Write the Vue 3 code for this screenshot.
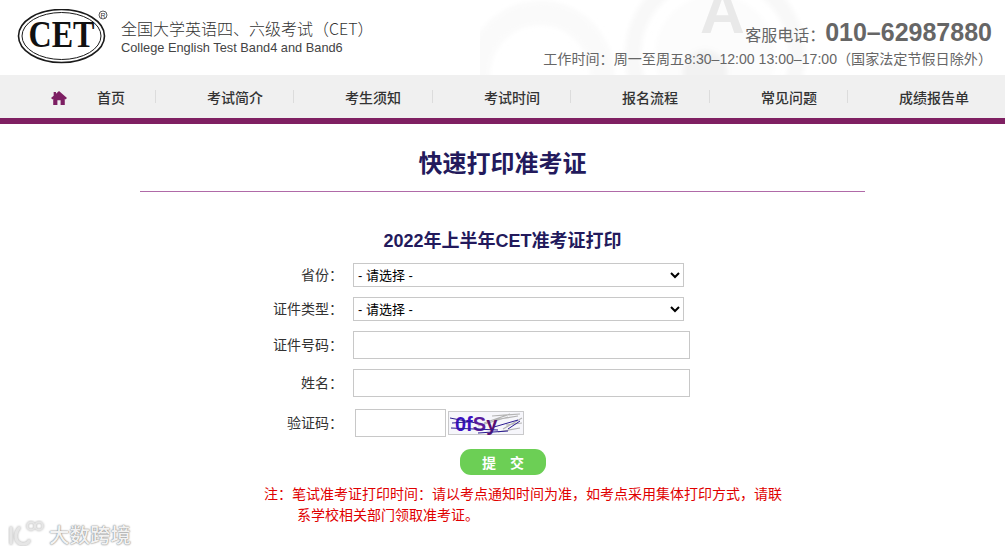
<script setup>
const navItems = [
  { label: '考试简介', width: 138 },
  { label: '考生须知', width: 139 },
  { label: '考试时间', width: 138 },
  { label: '报名流程', width: 139 },
  { label: '常见问题', width: 138 },
  { label: '成绩报告单', width: 156 }
]
</script>

<template>
  <div class="page">
    <header class="top">
      <svg class="decor" width="525" height="75" viewBox="0 0 525 75" aria-hidden="true">
        <defs>
          <filter id="soft"><feGaussianBlur stdDeviation="2.5" /></filter>
        </defs>
        <g filter="url(#soft)">
          <circle cx="60" cy="75" r="62" fill="none" stroke="#fafafa" stroke-width="24" />
          <circle cx="235" cy="55" r="82" fill="none" stroke="#f8f8f8" stroke-width="16" />
          <circle cx="235" cy="55" r="60" fill="#fcfcfc" />
          <circle cx="225" cy="72" r="22" fill="#f2f2f2" />
        </g>
        <text x="220" y="33" class="decor-a">A</text>
      </svg>

      <div class="brand">
        <svg class="logo" width="94" height="58" viewBox="0 0 94 58" aria-hidden="true">
          <ellipse cx="44.5" cy="27" rx="43" ry="26.500" fill="#fff" stroke="#1a1a1a" stroke-width="1.6" />
          <ellipse cx="44.5" cy="27" rx="39.5" ry="23.500" fill="none" stroke="#1a1a1a" stroke-width="1" />
          <text x="44.5" y="38" class="logo-text" text-anchor="middle" textLength="66" lengthAdjust="spacingAndGlyphs">CET</text>
          <circle cx="86" cy="6" r="4" fill="#fff" stroke="#333" stroke-width=".8" />
          <text x="86" y="8.5" class="logo-r" text-anchor="middle">R</text>
        </svg>
        <div class="brand-text">
          <div class="brand-cn">全国大学英语四、六级考试（CET）</div>
          <div class="brand-en">College English Test Band4 and Band6</div>
        </div>
      </div>

      <div class="contact">
        <div class="phone"><span class="phone-label">客服电话：</span><span class="phone-num">010–62987880</span></div>
        <div class="hours">工作时间：周一至周五8:30–12:00 13:00–17:00（国家法定节假日除外）</div>
      </div>
    </header>

    <nav class="nav">
      <svg class="home" width="16" height="14" viewBox="0 0 18 15" preserveAspectRatio="none" aria-hidden="true">
        <path d="M9 0 L18 7.6 L16.2 9 L15.5 8.4 V15 H10.8 V10 H7.2 V15 H2.5 V8.4 L1.8 9 L0 7.6 L3 5 V1.2 H5.6 V2.9 Z" fill="#7d1f63" />
      </svg>
      <a class="nav-item first">首页</a>
      <a
        v-for="item in navItems"
        :key="item.label"
        class="nav-item"
        :style="{ width: item.width + 'px' }"
      >{{ item.label }}</a>
    </nav>

    <main class="main">
      <h1 class="title">快速打印准考证</h1>
      <h2 class="subtitle">2022年上半年CET准考证打印</h2>

      <form class="form" @submit.prevent>
        <div class="row row-select">
          <label class="label">省份：</label>
          <select class="select"><option>- 请选择 -</option></select>
        </div>
        <div class="row row-select">
          <label class="label">证件类型：</label>
          <select class="select"><option>- 请选择 -</option></select>
        </div>
        <div class="row row-input">
          <label class="label">证件号码：</label>
          <input class="input" type="text" />
        </div>
        <div class="row row-input">
          <label class="label">姓名：</label>
          <input class="input" type="text" />
        </div>
        <div class="row row-input last">
          <label class="label">验证码：</label>
          <input class="input code" type="text" />
          <svg class="captcha" width="76" height="24" viewBox="0 0 76 24" aria-hidden="true">
            <rect x=".5" y=".5" width="75" height="23" fill="#f6f6fb" stroke="#999" stroke-dasharray="1 1" />
            <path d="M36 12 L62 3 M45 9 L70 5 M30 15 L60 6 M44 5 L72 3 M55 18 L74 7 M50 21 L72 17 M58 14 L74 12" stroke="#b4b4b4" stroke-width="1.2" fill="none" />
            <text x="7" y="20" class="captcha-text"><tspan fill="#3b10c4">0f</tspan><tspan fill="#5b1a9c">S</tspan><tspan fill="#5a1070">y</tspan></text>
            <path d="M2 7 L28 12 M3 17 L50 19 M30 22 L60 20 M46 16 L70 9 M60 18 L72 10 M4 12 L20 11" stroke="#2a1a90" stroke-width="1" fill="none" />
          </svg>
        </div>
        <button class="submit" type="submit">提　交</button>
      </form>

      <div class="note">
        <p class="note-line">注：笔试准考证打印时间：请以考点通知时间为准，如考点采用集体打印方式，请联</p>
        <p class="note-line indent">系学校相关部门领取准考证。</p>
      </div>
    </main>

    <div class="watermark">
      <svg width="38" height="26" viewBox="0 0 38 26" aria-hidden="true">
        <g fill="none" stroke="#e6e6e6" class="wm-stroke">
          <path d="M3 8 V23 M11 8 C6 14 7 23 14 24 C17 24.500 20 23 21 21" stroke-width="3.2" stroke-linecap="round" />
          <circle cx="23" cy="6" r="3.8" stroke-width="1.8" />
          <circle cx="31" cy="6" r="3.8" stroke-width="1.8" />
        </g>
      </svg>
      <span class="wm-text">大数跨境</span>
    </div>
  </div>
</template>

<style scoped>
.page {
  position: relative;
  width: 1005px;
  height: 551px;
  overflow: hidden;
  background: #fff;
  font-family: "Liberation Sans", "Noto Sans CJK SC", sans-serif;
}
.top {
  position: relative;
  height: 75px;
  display: flex;
  justify-content: space-between;
  box-sizing: border-box;
  padding: 9px 13px 0 17px;
}
.decor {
  position: absolute;
  left: 480px;
  top: 0;
}
.decor-a {
  font: bold 62px "Liberation Sans", sans-serif;
  fill: #e9e9e9;
}
.brand {
  position: relative;
  display: flex;
  align-items: flex-start;
}
.logo {
  display: block;
}
.logo-text {
  font: bold 37px "Liberation Serif", serif;
  fill: #111;
}
.logo-r {
  font: 7px "Liberation Sans", sans-serif;
  fill: #333;
}
.brand-text {
  margin: 9px 0 0 10px;
}
.brand-cn {
  font-family: "Noto Sans CJK SC", sans-serif;
  font-size: 16px;
  line-height: 20px;
  font-weight: 300;
  color: #333;
}
.brand-en {
  font-size: 12.8px;
  line-height: 19px;
  color: #444;
}
.contact {
  position: relative;
  text-align: right;
  color: #666;
}
.phone {
  display: flex;
  justify-content: flex-end;
  align-items: baseline;
  line-height: 30px;
  margin-top: 8px;
}
.phone-label {
  font-size: 16px;
}
.phone-num {
  font-size: 25px;
  font-weight: bold;
  color: #666;
}
.hours {
  font-size: 14.1px;
  line-height: 20px;
  margin-top: -2px;
  white-space: nowrap;
}
.nav {
  height: 43px;
  display: flex;
  align-items: center;
  background: #f0f0f0;
  border-bottom: 6px solid #7f2062;
  padding-left: 51px;
}
.home {
  display: block;
  margin-top: 3px;
  margin-right: 30px;
}
.nav-item {
  box-sizing: border-box;
  display: block;
  height: 13px;
  padding-left: 51px;
  line-height: 16px;
  font-size: 14px;
  font-weight: 500;
  color: #333;
  white-space: nowrap;
  border-left: 1px solid #dcdcdc;
}
.nav-item.first {
  border-left: 0;
  width: 58px;
  padding-left: 0;
}
.main {
  display: flex;
  flex-direction: column;
  align-items: center;
}
.title {
  width: 725px;
  height: 68px;
  box-sizing: border-box;
  margin: 0;
  padding-top: 24px;
  font-size: 24px;
  line-height: 32px;
  font-weight: bold;
  text-align: center;
  color: #231a5c;
  border-bottom: 1px solid #b06aa8;
}
.subtitle {
  margin: 37px 0 0;
  font-size: 18px;
  line-height: 24px;
  font-weight: bold;
  color: #231a5c;
  text-align: center;
}
.form {
  width: 725px;
  margin-top: 10px;
  display: flex;
  flex-direction: column;
  align-items: flex-start;
}
.row {
  display: flex;
  align-items: center;
}
.row-select {
  height: 24px;
  margin-bottom: 10px;
}
.row-input {
  height: 28px;
  margin-bottom: 10px;
}
.row-input:nth-child(4) {
  margin-bottom: 12px;
}
.row-input.last {
  margin-bottom: 12px;
}
.label {
  width: 206px;
  flex: none;
  font-size: 14px;
  color: #333;
  text-align: right;
  margin-left: -3px;
  margin-right: 10px;
  padding-bottom: 2px;
}
.select {
  width: 331px;
  height: 24px;
  box-sizing: border-box;
  font-family: inherit;
  font-size: 13px;
  color: #000;
  background: #fff;
  border: 1px solid #c8c8c8;
  border-radius: 0;
}
.input {
  width: 337px;
  height: 28px;
  box-sizing: border-box;
  background: #fff;
  border: 1px solid #c8c8c8;
  border-radius: 0;
  padding: 0;
  outline: 0;
}
.code {
  width: 91px;
  margin-left: 2px;
}
.captcha {
  display: block;
  align-self: flex-start;
  margin-left: 2px;
  margin-top: 2px;
}
.captcha-text {
  font: bold 20px "Liberation Sans", sans-serif;
}
.submit {
  width: 86px;
  height: 26px;
  margin: 0 0 0 320px;
  padding: 0;
  border: 0;
  border-radius: 11px;
  background: #6ccf55;
  color: #fff;
  font-family: inherit;
  font-size: 14px;
  font-weight: bold;
}
.note {
  width: 725px;
  margin-top: 9px;
  box-sizing: border-box;
  padding-left: 124px;
  color: #e00000;
  font-size: 14px;
  line-height: 21px;
}
.note-line {
  margin: 0;
  white-space: nowrap;
}
.indent {
  padding-left: 33px;
}
.watermark {
  position: absolute;
  left: 8px;
  top: 520px;
  display: flex;
  align-items: flex-end;
  gap: 3px;
}
.wm-stroke {
  filter: drop-shadow(0 0 1px #aaa);
}
.wm-text {
  font-family: "Noto Sans CJK SC", sans-serif;
  font-size: 20.5px;
  line-height: 24px;
  font-weight: 500;
  color: #f2f2f2;
  text-shadow: 0 0 2px #888, 0 0 1px #888;
}
</style>
